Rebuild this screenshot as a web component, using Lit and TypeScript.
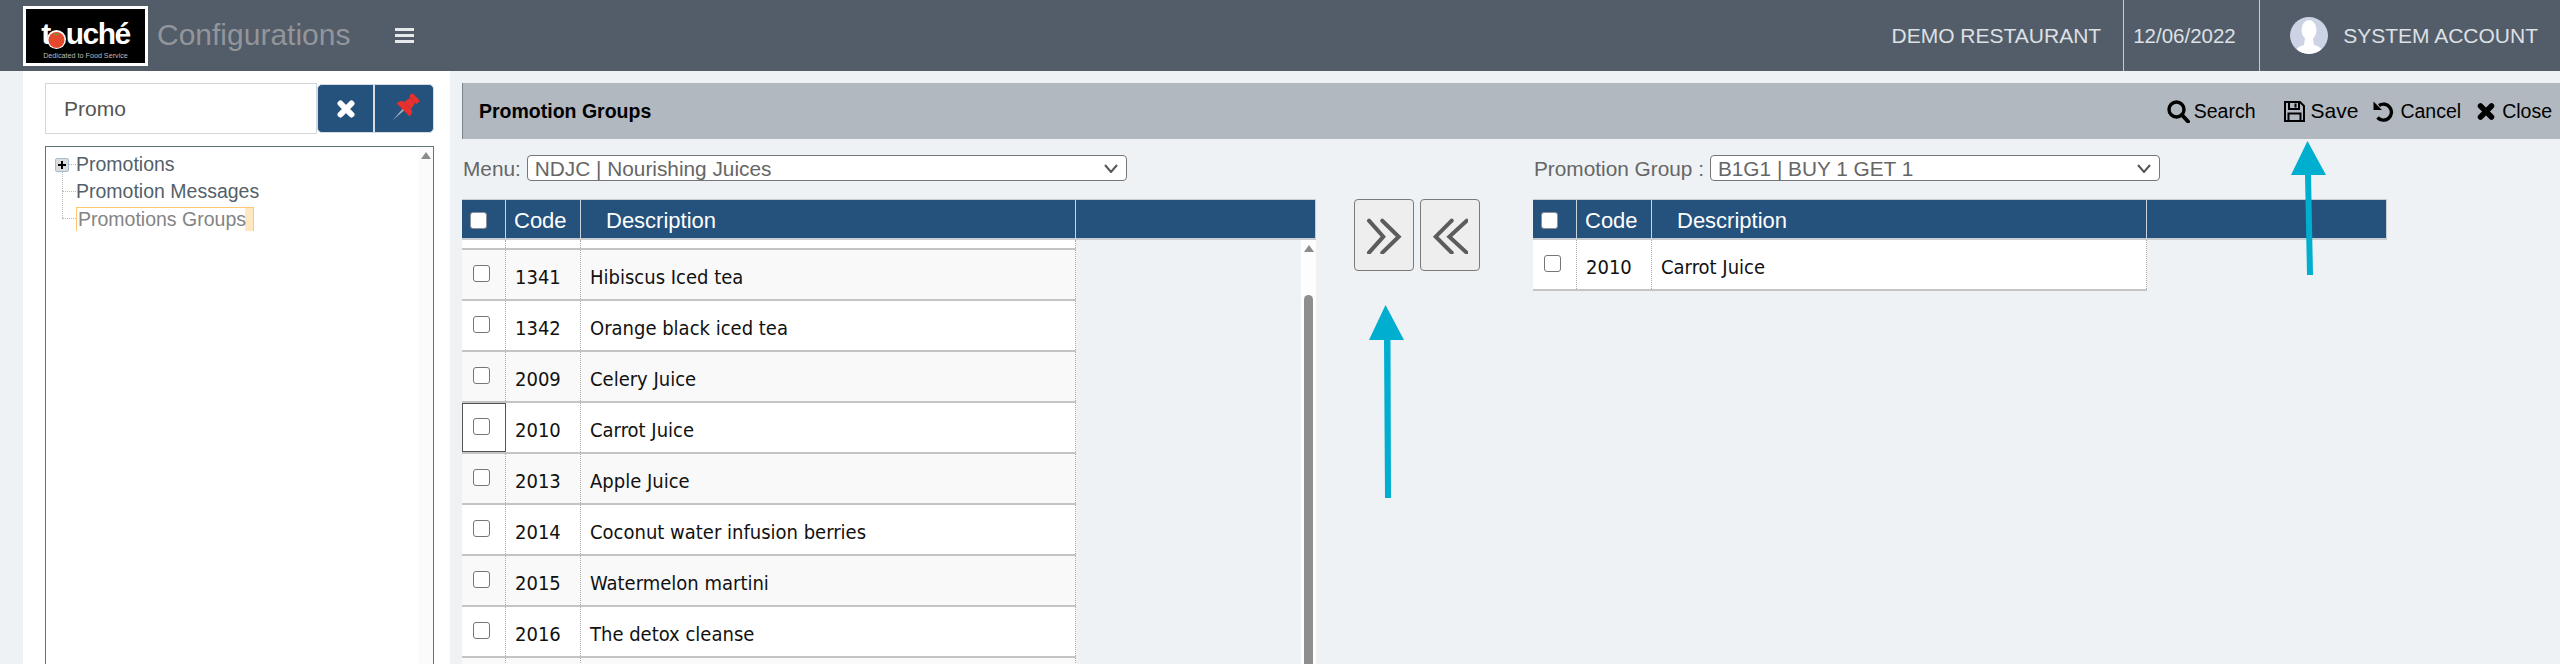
import { LitElement, html, css, svg } from "lit";
import { customElement } from "lit/decorators.js";

const ROWS = [
  ["1341", "Hibiscus Iced tea"],
  ["1342", "Orange black iced tea"],
  ["2009", "Celery Juice"],
  ["2010", "Carrot Juice"],
  ["2013", "Apple Juice"],
  ["2014", "Coconut water infusion berries"],
  ["2015", "Watermelon martini"],
  ["2016", "The detox cleanse"],
  ["", ""],
];

const chevron = (dir: "right" | "left") => html`
  <svg width="36" height="38" viewBox="0 0 36 38" fill="none" stroke="#5c5c5c" stroke-width="4" stroke-linecap="round">
    ${dir === "right"
      ? svg`<path d="M3 4.700 L17.300 20.700 L3 36.700" /><path d="M16.300 4.700 L32.700 20.700 L16.300 36.700" />`
      : svg`<path d="M19.700 4.700 L3.700 20.700 L19.700 36.700" /><path d="M34.700 4.700 L17.300 20.700 L34.700 36.700" />`}
  </svg>
`;

@customElement("app-root")
export class AppRoot extends LitElement {
  static styles = css`
    :host {
      display: block;
      position: relative;
      width: 2560px;
      height: 664px;
      overflow: hidden;
      background: #eef2f5;
      font-family: "Liberation Sans", Arial, sans-serif;
      color: #555;
    }

    header {
      display: flex;
      align-items: center;
      height: 71px;
      padding-left: 23px;
      background: #535c69;
      box-sizing: border-box;
    }

    .logo {
      display: flex;
      flex-direction: column;
      align-items: center;
      box-sizing: border-box;
      width: 125px;
      height: 60px;
      margin-top: 1px;
      padding-top: 15px;
      background: #000;
      border: 3px solid #fff;
      color: #fff;
    }

    .logo-name {
      display: flex;
      align-items: flex-end;
      height: 24px;
      font-size: 30px;
      font-weight: bold;
      letter-spacing: -1.5px;
      line-height: 28px;
    }

    .logo-name svg {
      margin: 0 0 -1px -3px;
    }

    .logo-tag {
      margin-top: 4px;
      font-size: 7.2px;
      line-height: 7px;
      color: #bbb;
    }

    .app-title {
      margin: 0 0 2px 9px;
      font-size: 30px;
      color: #92969a;
    }

    .menu-btn {
      display: flex;
      flex-direction: column;
      gap: 3px;
      width: 19px;
      margin-left: 45px;
    }

    .menu-btn span {
      height: 3px;
      background: #e6e8ea;
    }

    .header-right {
      display: flex;
      align-items: stretch;
      align-self: stretch;
      margin-left: auto;
      font-size: 21px;
      color: #dde0e4;
    }

    .header-right > div {
      display: flex;
      align-items: center;
    }

    .restaurant {
      padding-right: 22px;
    }

    .date {
      width: 137px;
      padding-left: 9px;
      box-sizing: border-box;
      border-left: 1px solid #c5c9cf;
      border-right: 1px solid #c5c9cf;
      font-size: 20.5px;
    }

    .account {
      gap: 15px;
      padding: 0 22px 0 30px;
    }

    .body {
      display: flex;
      height: 593px;
    }

    aside {
      box-sizing: border-box;
      width: 427px;
      margin-left: 23px;
      padding: 12px 16px 0 22px;
      background: #fff;
    }

    .search {
      display: flex;
      align-items: center;
      height: 51px;
    }

    .search-input {
      display: flex;
      align-items: center;
      box-sizing: border-box;
      width: 272px;
      height: 51px;
      padding-left: 18px;
      border: 1px solid #d3d7dc;
      font-size: 21px;
      color: #555;
    }

    .search-btn {
      display: flex;
      align-items: center;
      justify-content: center;
      box-sizing: border-box;
      height: 49px;
      background: #24527d;
      border: 1px solid #d6dce2;
    }

    .btn-clear {
      width: 57px;
      border-radius: 5px 0 0 5px;
    }

    .btn-pin {
      width: 60px;
      border-radius: 0 5px 5px 0;
    }

    .tree {
      display: flex;
      box-sizing: border-box;
      height: 530px;
      margin-top: 12px;
      border: 1px solid #5f7678;
    }

    .tree-list {
      flex: 1;
      padding: 4px 0 0 9px;
      font-size: 19.5px;
    }

    .tree-row {
      position: relative;
      display: flex;
      align-items: center;
      height: 27px;
      padding-left: 21px;
      color: #555f6b;
    }

    .tree-row::before {
      content: "";
      position: absolute;
      left: 7px;
      top: 13px;
      width: 14px;
      border-top: 1px dotted #bbb;
    }

    .tree-row.stem::after {
      content: "";
      position: absolute;
      left: 7px;
      top: -14px;
      height: 27px;
      border-left: 1px dotted #bbb;
    }

    .expander {
      position: absolute;
      z-index: 1;
      left: 0;
      top: 7px;
      display: flex;
      align-items: center;
      justify-content: center;
      box-sizing: border-box;
      width: 14px;
      height: 14px;
      background: #dcdcdc;
      border: 1px solid #a9bdd2;
      border-radius: 2px;
    }

    .tree-sel {
      box-sizing: border-box;
      width: 178px;
      height: 24px;
      padding-left: 1px;
      line-height: 22px;
      background: linear-gradient(to right, #fff 168px, #ffe7c0 168px);
      border: 1px solid #ffc76e;
      border-bottom: 0;
      color: #848484;
    }

    .tree-scroll {
      display: flex;
      justify-content: center;
      width: 15px;
      padding-top: 5px;
      background: #fbfbfb;
    }

    .arrow-up {
      width: 0;
      height: 0;
      border-left: 5px solid transparent;
      border-right: 5px solid transparent;
      border-bottom: 7px solid #8c8c8c;
    }

    main {
      flex: 1;
      min-width: 0;
      margin-left: 12px;
      padding-top: 12px;
    }

    .toolbar {
      display: flex;
      align-items: center;
      box-sizing: border-box;
      height: 56px;
      padding-left: 16px;
      background: #b1b8bf;
      border-left: 1px solid #7d858d;
      color: #000;
    }

    .toolbar h1 {
      margin: 0;
      font-size: 19.5px;
      font-weight: bold;
    }

    .actions {
      display: flex;
      align-items: center;
      margin-left: auto;
      padding-right: 8px;
      font-size: 19.5px;
    }

    .action {
      display: flex;
      align-items: center;
      gap: 6px;
    }

    .action-search {
      gap: 4px;
      margin-right: 28px;
    }

    .action-save {
      margin-right: 15px;
      font-size: 21px;
    }

    .action-cancel {
      margin-right: 16px;
    }

    .action-close {
      gap: 7px;
    }

    .columns {
      display: flex;
      margin-top: 16px;
    }

    .left-col {
      width: 854px;
    }

    .mid-col {
      display: flex;
      gap: 6px;
      width: 217px;
      padding: 44px 0 0 38px;
      box-sizing: border-box;
    }

    .right-col {
      width: 854px;
    }

    .picker {
      display: flex;
      align-items: center;
      gap: 6px;
      height: 26px;
      margin-bottom: 18px;
      padding-left: 1px;
      font-size: 20.8px;
      color: #666;
    }

    .picker > span {
      padding-top: 2px;
    }

    .select {
      display: flex;
      align-items: center;
      justify-content: space-between;
      box-sizing: border-box;
      height: 26px;
      padding: 2px 8px 0 7px;
      background: #fff;
      border: 1px solid #767676;
      border-radius: 4px;
    }

    .select svg {
      margin-top: -2px;
    }

    .left-col .select {
      width: 600px;
    }

    .right-col .select {
      width: 450px;
    }

    .move-btn {
      display: flex;
      align-items: center;
      justify-content: center;
      box-sizing: border-box;
      width: 60px;
      height: 72px;
      background: #eee;
      border: 1px solid #7a7a7a;
      border-radius: 4px;
    }

    .thead {
      display: grid;
      grid-template-columns: 44px 75px 495px 239px;
      box-sizing: border-box;
      height: 41px;
      padding-top: 3px;
      background: #24527d;
      color: #fff;
      font-size: 22px;
      border-top: 1px solid #c9cdd1;
      border-right: 1px solid #c9cdd1;
      border-bottom: 2px solid #c9cdd1;
    }

    .thead > div {
      display: flex;
      align-items: center;
      box-sizing: border-box;
      margin-top: -3px;
      padding: 3px 0 0 8px;
      border-right: 1px solid #c9d3dc;
    }

    .thead > div:last-child {
      border-right: 0;
    }

    .thead .head-desc {
      padding-left: 25px;
    }

    .head-check {
      display: block;
      box-sizing: border-box;
      width: 17px;
      height: 17px;
      background: #fff;
      border: 1px solid #8a9199;
      border-radius: 3px;
    }

    .tbody {
      display: flex;
      height: 430px;
    }

    .rows {
      width: 614px;
    }

    .row {
      display: grid;
      grid-template-columns: 44px 75px 495px;
      box-sizing: border-box;
      height: 51px;
      background: #f9f9f9;
      border-bottom: 2px solid #c4c4c4;
      color: #111;
      font-family: "DejaVu Sans", sans-serif;
      font-stretch: condensed;
      font-size: 20px;
    }

    .row.even {
      background: #fff;
    }

    .row.spacer {
      height: 10px;
      background: #fff;
    }

    .row > div {
      display: flex;
      align-items: center;
      box-sizing: border-box;
      padding: 4px 0 0 9px;
      border-right: 1px dotted #aaa;
    }

    .row > .check {
      align-items: flex-start;
      padding: 15px 0 0 11px;
    }

    .row > .check.focus {
      border: 1px solid #555;
      padding: 14px 0 0 10px;
    }

    .row-check {
      display: block;
      box-sizing: border-box;
      width: 17px;
      height: 17px;
      background: #fff;
      border: 1px solid #767676;
      border-radius: 3px;
    }

    .table-scroll {
      position: relative;
      box-sizing: border-box;
      display: flex;
      justify-content: center;
      width: 15px;
      margin-left: 225px;
      padding-top: 5px;
      background: #fdfdfd;
    }

    .table-thumb {
      position: absolute;
      left: 3px;
      top: 55px;
      bottom: 0;
      width: 9px;
      border-radius: 5px 5px 0 0;
      background: #8e8e8e;
    }

    .annot {
      position: absolute;
      left: 0;
      top: 0;
      pointer-events: none;
    }
  `;

  render() {
    return html`
      <header>
        <div class="logo">
          <div class="logo-name">
            <span>t</span>
            <svg width="19" height="19" viewBox="0 0 19 19">
              <circle cx="9.500" cy="9.500" r="9.500" fill="#fff" />
              <circle cx="9.500" cy="10" r="8" fill="#e5482a" />
              <path d="M6 4.500 Q9.500 2 13 4.500 Q9.500 6 6 4.500Z" fill="#7d8f3a" />
            </svg>
            <span>uché</span>
          </div>
          <div class="logo-tag">Dedicated to Food Service</div>
        </div>
        <div class="app-title">Configurations</div>
        <div class="menu-btn"><span></span><span></span><span></span></div>
        <div class="header-right">
          <div class="restaurant">DEMO RESTAURANT</div>
          <div class="date">12/06/2022</div>
          <div class="account">
            <svg width="38" height="37" viewBox="0 0 38 37">
              <defs>
                <clipPath id="avatar"><ellipse cx="19" cy="18.5" rx="19" ry="18.5" /></clipPath>
              </defs>
              <ellipse cx="19" cy="18.5" rx="19" ry="18.5" fill="#ccd3e5" />
              <g clip-path="url(#avatar)" fill="#fff">
                <ellipse cx="19" cy="13" rx="7.5" ry="10" />
                <path d="M15 21 L23 21 L24 28 Q33 30 33 37 L5 37 Q5 30 14 28Z" />
              </g>
            </svg>
            <span>SYSTEM ACCOUNT</span>
          </div>
        </div>
      </header>
      <div class="body">
        <aside>
          <div class="search">
            <div class="search-input">Promo</div>
            <div class="search-btn btn-clear">
              <svg width="18" height="18" viewBox="0 0 18 18">
                <path d="M3.500 3.500 L14.500 14.500 M14.500 3.500 L3.500 14.500" stroke="#fff" stroke-width="6" stroke-linecap="round" />
              </svg>
            </div>
            <div class="search-btn btn-pin">
              <svg width="32" height="32" viewBox="0 0 26 26">
                <g transform="rotate(45 13 13)">
                  <path d="M12 13 H14 L13 26 Z" fill="#a9b4bd" />
                  <rect x="8.500" y="-1" width="9" height="4" rx="1.500" fill="#e8302c" />
                  <path d="M10 3 H16 L17 9 H9Z" fill="#e8302c" />
                  <path d="M5.500 14 Q6 9 9 9 H17 Q20 9 20.500 14Z" fill="#e8302c" />
                </g>
              </svg>
            </div>
          </div>
          <div class="tree">
            <div class="tree-list">
              <div class="tree-row">
                <span class="expander">
                  <svg width="10" height="10" viewBox="0 0 10 10"><path d="M5 1 V9 M1 5 H9" stroke="#000" stroke-width="2" /></svg>
                </span>
                Promotions
              </div>
              <div class="tree-row stem">Promotion Messages</div>
              <div class="tree-row stem"><div class="tree-sel">Promotions Groups</div></div>
            </div>
            <div class="tree-scroll"><div class="arrow-up"></div></div>
          </div>
        </aside>
        <main>
          <div class="toolbar">
            <h1>Promotion Groups</h1>
            <div class="actions">
              <div class="action action-search">
                <svg width="23" height="23" viewBox="0 0 23 23" fill="none" stroke="#000">
                  <circle cx="9.500" cy="9.500" r="7.500" stroke-width="3.400" />
                  <path d="M15 15 L21 21.500" stroke-width="4" stroke-linecap="round" />
                </svg>
                Search
              </div>
              <div class="action action-save">
                <svg width="21" height="21" viewBox="0 0 21 21" fill="none" stroke="#000" stroke-width="2">
                  <path d="M1 1 H16 L20 5 V20 H1Z" />
                  <path d="M5 1 V8 H15 V1 M11.500 2.500 V6.500" />
                  <path d="M4.500 20 V12.500 H16.500 V20" />
                </svg>
                Save
              </div>
              <div class="action action-cancel">
                <svg width="21" height="21" viewBox="0 0 21 21" fill="none" stroke="#000">
                  <path d="M6 4.500 A8 8 0 1 1 4.500 16.500" stroke-width="3.400" />
                  <path d="M0.500 0.500 L0.500 9 L9 9Z" fill="#000" stroke="none" />
                </svg>
                Cancel
              </div>
              <div class="action action-close">
                <svg width="18" height="17" viewBox="0 0 18 17">
                  <path d="M3.500 3 L14.500 14 M14.500 3 L3.500 14" stroke="#000" stroke-width="5.500" stroke-linecap="round" />
                </svg>
                Close
              </div>
            </div>
          </div>
          <div class="columns">
            <div class="left-col">
              <div class="picker">
                <span>Menu:</span>
                <div class="select">
                  <span>NDJC | Nourishing Juices</span>${this.caret()}
                </div>
              </div>
              ${this.head()}
              <div class="tbody">
                <div class="rows">
                  <div class="row spacer"><div></div><div></div><div></div></div>
                  ${ROWS.map(
                    ([code, name], i) => html`
                      <div class="row ${i % 2 ? "even" : ""}">
                        <div class="check ${code === "2010" ? "focus" : ""}">
                          <span class="row-check"></span>
                        </div>
                        <div>${code}</div>
                        <div>${name}</div>
                      </div>
                    `
                  )}
                </div>
                <div class="table-scroll">
                  <div class="arrow-up"></div>
                  <div class="table-thumb"></div>
                </div>
              </div>
            </div>
            <div class="mid-col">
              <div class="move-btn">${chevron("right")}</div>
              <div class="move-btn">${chevron("left")}</div>
            </div>
            <div class="right-col">
              <div class="picker">
                <span>Promotion Group :</span>
                <div class="select">
                  <span>B1G1 | BUY 1 GET 1</span>${this.caret()}
                </div>
              </div>
              ${this.head()}
              <div class="rows">
                <div class="row even">
                  <div class="check"><span class="row-check"></span></div>
                  <div>2010</div>
                  <div>Carrot Juice</div>
                </div>
              </div>
            </div>
          </div>
        </main>
      </div>
      <svg class="annot" width="2560" height="664" viewBox="0 0 2560 664">
        <path d="M1385.500 305 L1404 340 L1390.500 340 L1391 498 L1385 498 L1384 340 L1369 340Z" fill="#00aecf" />
        <path d="M2307.500 141 L2326 175 L2311 175 L2313 275 L2307 275 L2305 175 L2291 175Z" fill="#00aecf" />
      </svg>
    `;
  }

  caret() {
    return html`<svg width="14" height="9" viewBox="0 0 14 9" fill="none" stroke="#555" stroke-width="2"><path d="M1 1 L7 8 L13 1" /></svg>`;
  }

  head() {
    return html`
      <div class="thead">
        <div><span class="head-check"></span></div>
        <div>Code</div>
        <div class="head-desc">Description</div>
        <div></div>
      </div>
    `;
  }
}
